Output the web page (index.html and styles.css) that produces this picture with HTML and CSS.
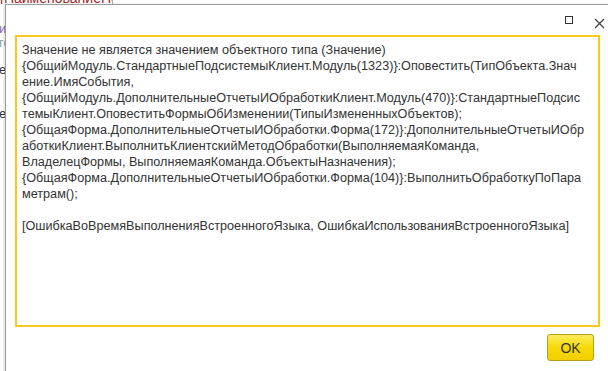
FILE: index.html
```html
<!DOCTYPE html>
<html lang="ru">
<head>
    <meta charset="UTF-8">
    <meta name="viewport" content="width=device-width, initial-scale=1.0">
    <title>Ошибка</title>
    <link rel="stylesheet" href="styles.css">
</head>
<body>
    <div id="behind">
        <div class="behind-head">
            <span class="head-text">[НаименованиеПол</span>
            <span class="head-sep"></span>
        </div>
        <div class="behind-side">
            <span class="side-a">и</span>
            <span class="side-b">го</span>
            <span class="side-c">е</span>
            <span class="side-d">е</span>
        </div>
    </div>

    <div id="dialog">
        <div class="titlebar">
            <span class="title-btn maximize"></span>
            <span class="title-btn close">
                <svg width="11" height="11" viewBox="0 0 11 11">
                    <path d="M1 1 L10 10 M10 1 L1 10" stroke="#444" stroke-width="1.3" fill="none"/>
                </svg>
            </span>
        </div>
        <div class="message">
            Значение не является значением объектного типа (Значение)<br>
            {ОбщийМодуль.СтандартныеПодсистемыКлиент.Модуль(1323)}:Оповестить(ТипОбъекта.Знач<br>
            ение.ИмяСобытия,<br>
            {ОбщийМодуль.ДополнительныеОтчетыИОбработкиКлиент.Модуль(470)}:СтандартныеПодсис<br>
            темыКлиент.ОповеститьФормыОбИзменении(ТипыИзмененныхОбъектов);<br>
            {ОбщаяФорма.ДополнительныеОтчетыИОбработки.Форма(172)}:ДополнительныеОтчетыИОбр<br>
            аботкиКлиент.ВыполнитьКлиентскийМетодОбработки(ВыполняемаяКоманда,<br>
            ВладелецФормы, ВыполняемаяКоманда.ОбъектыНазначения);<br>
            {ОбщаяФорма.ДополнительныеОтчетыИОбработки.Форма(104)}:ВыполнитьОбработкуПоПара<br>
            метрам();<br>
            <br>
            [ОшибкаВоВремяВыполненияВстроенногоЯзыка, ОшибкаИспользованияВстроенногоЯзыка]
        </div>
        <div class="buttons">
            <button class="button ok">OK</button>
        </div>
    </div>
</body>
</html>
```

FILE: styles.css
```css
body {
    font-family: 'Liberation Sans', Arial, sans-serif;
    background-color: #fff;
    margin: 0;
    width: 608px;
    height: 371px;
    overflow: hidden;
    position: relative;
}

#behind {
    height: 100%;
}

.behind-head {
    height: 4px;
    display: flex;
    overflow: hidden;
}

.head-text {
    display: block;
    width: 112px;
    font-size: 14px;
    line-height: 14px;
    margin-top: -9px;
    color: #a3282a;
    white-space: nowrap;
    overflow: hidden;
}

.head-sep {
    width: 1px;
    background-color: #b0b0b0;
}

.behind-side {
    display: flex;
    flex-direction: column;
    align-items: flex-start;
    font-size: 13px;
    line-height: 14px;
    padding-top: 18px;
    margin-left: -1px;
}

.side-a {
    color: #8a68b0;
}

.side-b {
    color: #8e9aa8;
}

.side-c {
    color: #333;
    margin-top: 13px;
}

.side-d {
    color: #333;
    margin-top: 30px;
}

#dialog {
    position: absolute;
    left: 5px;
    top: 4px;
    width: 618px;
    height: 380px;
    background-color: #fff;
    border: 1px solid #9c9c9c;
    box-shadow: -1px 0 2px rgba(0, 0, 0, 0.15);
}

.titlebar {
    height: 30px;
    display: flex;
    justify-content: flex-end;
    align-items: flex-start;
    padding-right: 19px;
    gap: 21px;
}

.title-btn {
    display: block;
    margin-top: 10px;
}

.maximize {
    width: 6px;
    height: 6px;
    margin-top: 11px;
    border: 1.5px solid #333;
}

.close {
    width: 11px;
    height: 11px;
}

.message {
    width: 573px;
    height: 283px;
    margin-left: 9px;
    padding: 5px 3px 0 5px;
    border: 2px solid #fbc81c;
    font-size: 12.65px;
    line-height: 16px;
    color: #333;
    white-space: nowrap;
    overflow: hidden;
}

.buttons {
    display: flex;
    justify-content: flex-end;
    width: 583px;
    margin-left: 9px;
    padding-top: 7px;
}

.button {
    width: 47px;
    height: 27px;
    margin-right: 4px;
    font-family: 'Liberation Sans', Arial, sans-serif;
    font-size: 14px;
    color: #333;
    border: 1px solid #b4a018;
    border-radius: 3px;
    background: linear-gradient(#fcec5c, #f6d800 55%, #f2d000);
    cursor: pointer;
}
```
